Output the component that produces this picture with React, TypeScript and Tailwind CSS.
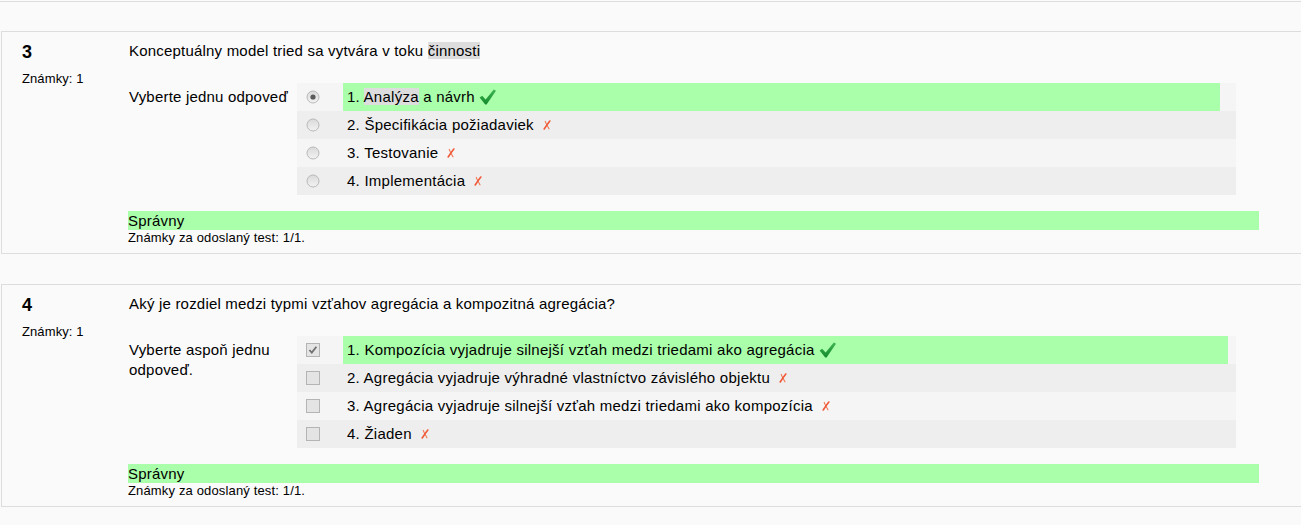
import React from "react";

type Answer = {
  label: React.ReactNode;
  correct: boolean;
  checked: boolean;
};

const Tick = () => (
  <svg width="18" height="16" viewBox="0 0 18 16" className="ml-[4px] shrink-0">
    <defs>
      <linearGradient id="tickg" x1="0" y1="0" x2="0" y2="1">
        <stop offset="0" stopColor="#3fb553" />
        <stop offset="1" stopColor="#138a2c" />
      </linearGradient>
    </defs>
    <path
      d="M0.6 8.6 L3.2 6.8 L6.6 10.6 L14.8 0.6 L17 1.8 L7.6 15.4 L6.2 15.4 Z"
      fill="url(#tickg)"
    />
  </svg>
);

const Cross = () => (
  <svg width="8" height="10" viewBox="0 0 8 10" className="ml-[9px] shrink-0">
    <path d="M2.2 1.4 Q3.6 5 6 8.8" fill="none" stroke="#f3734f" strokeWidth="1.1" strokeLinecap="round" />
    <path d="M6.8 1 Q4 4.6 1.2 9" fill="none" stroke="#ef5a3a" strokeWidth="1.6" strokeLinecap="round" />
  </svg>
);

const Radio = ({ checked }: { checked: boolean }) => (
  <svg width="14" height="14" viewBox="0 0 14 14">
    <defs>
      <linearGradient id="radg" x1="0" y1="0" x2="0" y2="1">
        <stop offset="0" stopColor="#d9d9d9" />
        <stop offset="1" stopColor="#f3f3f3" />
      </linearGradient>
    </defs>
    <circle cx="7" cy="7" r="6" fill="url(#radg)" stroke="#b9b9b9" strokeWidth="1" />
    {checked && <circle cx="7" cy="7" r="2.6" fill="#5a5a5a" />}
  </svg>
);

const Checkbox = ({ checked }: { checked: boolean }) => (
  <svg width="14" height="14" viewBox="0 0 14 14">
    <rect x="0.5" y="0.5" width="13" height="13" fill="#e4e4e4" stroke="#b4b4b4" strokeWidth="1" />
    {checked && (
      <path d="M3.4 7 L5.8 9.6 L10.4 3.8" fill="none" stroke="#707070" strokeWidth="1.8" />
    )}
  </svg>
);

const Question = ({
  num,
  text,
  prompt,
  multi,
  greenWidth,
  answers,
}: {
  num: string;
  text: React.ReactNode;
  prompt: string;
  multi: boolean;
  greenWidth: string;
  answers: Answer[];
}) => {
  return (
    <div className="ml-[1px] flex w-[1340px] border border-[#dddddd] bg-[#fafafa]">
      <div className="w-[126px] shrink-0 pl-[20px] pt-[9px]">
        <h3 className="text-[18px] font-bold leading-[22px]">{num}</h3>
        <p className="mt-[8px] text-[13px] leading-[16px] tracking-[0.1px]">Známky: 1</p>
      </div>
      <div className="w-[1131px] pt-[9px] pb-[7px]">
        <p className="pl-[1px] text-[15px] leading-[20px] tracking-[0.2px]">{text}</p>
        <div className="mt-[22px] flex">
          <div className="w-[169px] shrink-0 pl-[1px] pr-[6px] pt-[4px] text-[15px] leading-[20px] tracking-[0.2px]">
            {prompt}
          </div>
          <div className="w-[939px]">
            {answers.map((a, i) => (
              <div
                key={i}
                className={`flex h-[28px] text-[15px] leading-[20px] tracking-[0.25px] ${
                  i % 2 === 0 ? "bg-[#f5f5f5]" : "bg-[#eeeeee]"
                }`}
              >
                <div className="flex w-[46px] shrink-0 items-center pl-[9px]">
                  {multi ? <Checkbox checked={a.checked} /> : <Radio checked={a.checked} />}
                </div>
                <div
                  className={`flex items-center pl-[4px] ${
                    a.correct ? `bg-[#aaffaa] ${greenWidth}` : ""
                  }`}
                >
                  <span>{a.label}</span>
                  {a.correct ? <Tick /> : <Cross />}
                </div>
              </div>
            ))}
          </div>
        </div>
        <div className="mt-[16px] h-[19px] bg-[#aaffaa] text-[15px] leading-[19px] tracking-[0.2px]">Správny</div>
        <p className="text-[13px] leading-[16px] tracking-[0.15px]">Známky za odoslaný test: 1/1.</p>
      </div>
    </div>
  );
};

export default function App() {
  return (
    <div className="min-h-screen w-full overflow-hidden bg-[#fafafa] font-['Liberation_Sans',Arial,sans-serif] text-black">
      <div className="h-[2px] border-b border-[#dddddd]" />
      <div className="mt-[29px]">
        <Question
          num="3"
          text={
            <>
              Konceptuálny model tried sa vytvára v toku{" "}
              <span className="bg-[#dddddd]">činnosti</span>
            </>
          }
          prompt="Vyberte jednu odpoveď"
          multi={false}
          greenWidth="w-[877px]"
          answers={[
            {
              label: (
                <>
                  1. <span className="bg-[#dddddd]">Analýza</span> a návrh
                </>
              ),
              correct: true,
              checked: true,
            },
            { label: "2. Špecifikácia požiadaviek", correct: false, checked: false },
            { label: "3. Testovanie", correct: false, checked: false },
            { label: "4. Implementácia", correct: false, checked: false },
          ]}
        />
      </div>
      <div className="mt-[30px]">
        <Question
          num="4"
          text="Aký je rozdiel medzi typmi vzťahov agregácia a kompozitná agregácia?"
          prompt="Vyberte aspoň jednu odpoveď."
          multi={true}
          greenWidth="w-[885px]"
          answers={[
            {
              label: "1. Kompozícia vyjadruje silnejší vzťah medzi triedami ako agregácia",
              correct: true,
              checked: true,
            },
            {
              label: "2. Agregácia vyjadruje výhradné vlastníctvo závislého objektu",
              correct: false,
              checked: false,
            },
            {
              label: "3. Agregácia vyjadruje silnejší vzťah medzi triedami ako kompozícia",
              correct: false,
              checked: false,
            },
            { label: "4. Žiaden", correct: false, checked: false },
          ]}
        />
      </div>
    </div>
  );
}
